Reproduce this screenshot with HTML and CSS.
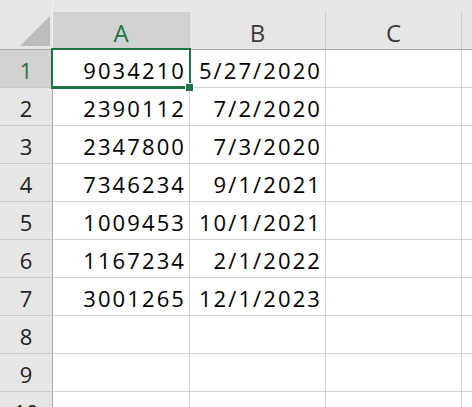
FILE: index.html
```html
<!DOCTYPE html>
<html lang="en">
<head>
    <meta charset="UTF-8">
    <meta name="viewport" content="width=device-width, initial-scale=1.0">
    <title>Book1</title>
    <link rel="stylesheet" href="styles.css">
</head>
<body>
<div class="sheet">
    <div class="row head">
        <div class="corner">
            <svg class="corner-mark" width="32" height="32" viewBox="0 0 32 32"><polygon points="1,31 31,31 31,1" fill="#bcbcbc"/></svg>
        </div>
        <div class="col-head active">A</div>
        <div class="col-head">B</div>
        <div class="col-head">C</div>
        <div class="col-head rest"></div>
    </div>

    <div class="row">
        <div class="row-head active">1</div>
        <div class="cell num selected">9034210</div>
        <div class="cell num">5/27/2020</div>
        <div class="cell"></div>
        <div class="cell rest"></div>
    </div>
    <div class="row">
        <div class="row-head">2</div>
        <div class="cell num">2390112</div>
        <div class="cell num">7/2/2020</div>
        <div class="cell"></div>
        <div class="cell rest"></div>
    </div>
    <div class="row">
        <div class="row-head">3</div>
        <div class="cell num">2347800</div>
        <div class="cell num">7/3/2020</div>
        <div class="cell"></div>
        <div class="cell rest"></div>
    </div>
    <div class="row">
        <div class="row-head">4</div>
        <div class="cell num">7346234</div>
        <div class="cell num">9/1/2021</div>
        <div class="cell"></div>
        <div class="cell rest"></div>
    </div>
    <div class="row">
        <div class="row-head">5</div>
        <div class="cell num">1009453</div>
        <div class="cell num">10/1/2021</div>
        <div class="cell"></div>
        <div class="cell rest"></div>
    </div>
    <div class="row">
        <div class="row-head">6</div>
        <div class="cell num">1167234</div>
        <div class="cell num">2/1/2022</div>
        <div class="cell"></div>
        <div class="cell rest"></div>
    </div>
    <div class="row">
        <div class="row-head">7</div>
        <div class="cell num">3001265</div>
        <div class="cell num">12/1/2023</div>
        <div class="cell"></div>
        <div class="cell rest"></div>
    </div>
    <div class="row">
        <div class="row-head">8</div>
        <div class="cell"></div>
        <div class="cell"></div>
        <div class="cell"></div>
        <div class="cell rest"></div>
    </div>
    <div class="row">
        <div class="row-head">9</div>
        <div class="cell"></div>
        <div class="cell"></div>
        <div class="cell"></div>
        <div class="cell rest"></div>
    </div>
    <div class="row">
        <div class="row-head">10</div>
        <div class="cell"></div>
        <div class="cell"></div>
        <div class="cell"></div>
        <div class="cell rest"></div>
    </div>
</div>
</body>
</html>
```

FILE: styles.css
```css
body {
    margin: 0;
    background-color: #ffffff;
    font-family: "Open Sans", "Liberation Sans", sans-serif;
    font-size: 22px;
    letter-spacing: 2.1px;
    color: #000000;
    overflow: hidden;
}
.sheet {
    width: 472px;
    height: 407px;
    overflow: hidden;
}
.row {
    display: grid;
    grid-template-columns: 53px 137px 136px 136px 1fr;
    height: 38px;
}
.row.head {
    height: 50px;
    background-color: #e6e6e6;
    border-bottom: 1px solid #ababab;
    box-sizing: border-box;
}

/* top-left select-all box */
.corner {
    position: relative;
    border-right: 1px solid #f2f2f2;
}
.corner-mark {
    position: absolute;
    left: 19px;
    top: 15px;
}

.col-head {
    align-self: end;
    height: 37px;
    display: flex;
    align-items: center;
    justify-content: center;
    padding-top: 3px;
    font-size: 24px;
    letter-spacing: 0;
    color: #3b3b3b;
    border-right: 1px solid #c9c9c9;
    box-sizing: border-box;
}
.col-head.active {
    background-color: #d2d2d2;
    color: #217346;
}
.col-head.rest {
    border-right: none;
}

.row-head {
    display: flex;
    align-items: center;
    justify-content: center;
    background-color: #e6e6e6;
    color: #222222;
    letter-spacing: 0;
    border-right: 1px solid #ababab;
    border-bottom: 1px solid #c9c9c9;
    padding-top: 2px;
    box-sizing: border-box;
}
.row-head.active {
    background-color: #d2d2d2;
    color: #217346;
}

.cell {
    border-right: 1px solid #d4d4d4;
    border-bottom: 1px solid #d4d4d4;
    display: flex;
    align-items: center;
    justify-content: flex-end;
    padding: 2px 3px 0 0;
    box-sizing: border-box;
    white-space: nowrap;
}
.cell.rest {
    border-right: none;
}

/* active cell outline + fill handle */
.cell.selected {
    position: relative;
}
.cell.selected::after {
    content: "";
    position: absolute;
    left: -2px;
    top: -2px;
    right: -2px;
    bottom: -2px;
    border: 2px solid #217346;
    border-bottom-width: 3px;
}
.cell.selected::before {
    content: "";
    position: absolute;
    right: -5px;
    bottom: -5px;
    width: 7px;
    height: 7px;
    background-color: #217346;
    border: 1px solid #ffffff;
    z-index: 1;
}
```
